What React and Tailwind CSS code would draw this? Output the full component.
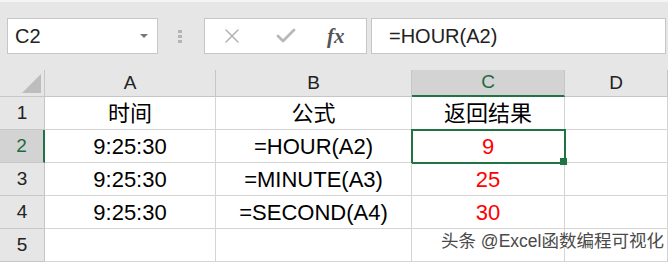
import { X, Check } from "lucide-react";

const cols = [
  { key: "A", w: "w-[171px]" },
  { key: "B", w: "w-[196px]" },
  { key: "C", w: "w-[153px]" },
  { key: "D", w: "w-[103px]" },
];

const rows = [
  ["时间", "公式", "返回结果", ""],
  ["9:25:30", "=HOUR(A2)", "9", ""],
  ["9:25:30", "=MINUTE(A3)", "25", ""],
  ["9:25:30", "=SECOND(A4)", "30", ""],
  ["", "", "", ""],
];

function Toolbar() {
  return (
    <div className="h-[70px] bg-[#e6e6e6] border-t-2 border-[#f4f4f4] pt-[16px] flex items-start">
      {/* name box */}
      <div className="ml-[7px] w-[151px] h-[36px] bg-white border border-[#c6c6c6] flex items-center pl-[7px] pr-[9px]">
        <span className="text-[20px] text-[#222] flex-1 leading-none">C2</span>
        <span className="w-0 h-0 border-l-[4px] border-r-[4px] border-t-[4px] border-l-transparent border-r-transparent border-t-[#777]" />
      </div>
      {/* grip dots */}
      <div className="ml-[20px] w-[4px] h-[36px] flex flex-col justify-center gap-[2px]">
        <span className="w-[4px] h-[3px] bg-[#b4b4b4]" />
        <span className="w-[4px] h-[3px] bg-[#b4b4b4]" />
        <span className="w-[4px] h-[3px] bg-[#b4b4b4]" />
      </div>
      {/* cancel / enter / fx */}
      <div className="ml-[22px] w-[163px] h-[36px] bg-white border border-[#c6c6c6] flex items-center">
        <X className="ml-[15px] text-[#b0b0b0]" size={24} strokeWidth={1.4} />
        <Check className="ml-[30px] text-[#b8b8b8]" size={24} strokeWidth={2.8} />
        <span className="ml-[29px] text-[#555] text-[21px] italic font-semibold leading-none" style={{ fontFamily: '"Liberation Serif", serif' }}>
          fx
        </span>
      </div>
      {/* formula input */}
      <div className="ml-[4px] w-[295px] h-[36px] bg-white border border-[#c6c6c6] flex items-center pl-[17px]">
        <span className="text-[20px] text-[#222] leading-none">=HOUR(A2)</span>
      </div>
    </div>
  );
}

export default function App() {
  return (
    <div
      className="relative w-[668px] h-[264px] overflow-hidden bg-white"
      style={{ fontFamily: '"Liberation Sans", "Noto Sans CJK SC", sans-serif' }}
    >
      <Toolbar />

      {/* column headers */}
      <div className="flex h-[27px] bg-[#e6e6e6]">
        <div className="w-[45px] shrink-0 border-r border-b border-[#c6c6c6] flex items-end justify-end pr-[3px] pb-[3px]">
          <span className="w-0 h-0 [border-bottom:19px_solid_#bdbdbd] [border-left:19px_solid_transparent]" />
        </div>
        {cols.map((c) =>
          c.key === "C" ? (
            <div
              key={c.key}
              className={`${c.w} shrink-0 bg-[#d3d3d3] border-r border-[#c6c6c6] border-b-2 border-b-[#217346] flex items-center justify-center text-[19px] text-[#1e6b3f]`}
            >
              {c.key}
            </div>
          ) : (
            <div
              key={c.key}
              className={`${c.w} shrink-0 border-r border-b border-[#c6c6c6] flex items-center justify-center text-[19px] text-[#222]`}
            >
              {c.key}
            </div>
          )
        )}
      </div>

      {/* rows */}
      {rows.map((r, i) => (
        <div key={i} className="flex h-[33px]">
          {i === 1 ? (
            <div className="w-[45px] shrink-0 bg-[#d3d3d3] border-b border-[#c6c6c6] border-r-2 border-r-[#217346] flex items-center justify-center text-[19px] text-[#1e6b3f]">
              {i + 1}
            </div>
          ) : (
            <div className="w-[45px] shrink-0 bg-[#e6e6e6] border-r border-b border-[#c6c6c6] flex items-center justify-center text-[19px] text-[#222]">
              {i + 1}
            </div>
          )}
          {r.map((v, j) => (
            <div
              key={j}
              className={`${cols[j].w} shrink-0 relative border-r border-b border-[#d4d4d4] flex items-center justify-center text-[22px] ${
                j === 2 && i > 0 ? "text-[#ff0000]" : "text-black"
              }`}
            >
              {v}
              {i === 1 && j === 2 && (
                <>
                  <div className="absolute left-[-1px] top-[-1px] w-[155px] h-[35px] border-2 border-[#217346]" />
                  <div className="absolute left-[148px] top-[28px] w-[7px] h-[7px] bg-[#217346] z-10" />
                </>
              )}
            </div>
          ))}
        </div>
      ))}

      {/* watermark */}
      <div
        className="absolute left-[441px] top-[233px] w-[224px] whitespace-nowrap text-[17.5px] leading-none text-[#4a4a4a]"
        style={{ textShadow: "0 0 2px #fff, 0 0 2px #fff" }}
      >
        头条 @Excel函数编程可视化
      </div>
    </div>
  );
}
